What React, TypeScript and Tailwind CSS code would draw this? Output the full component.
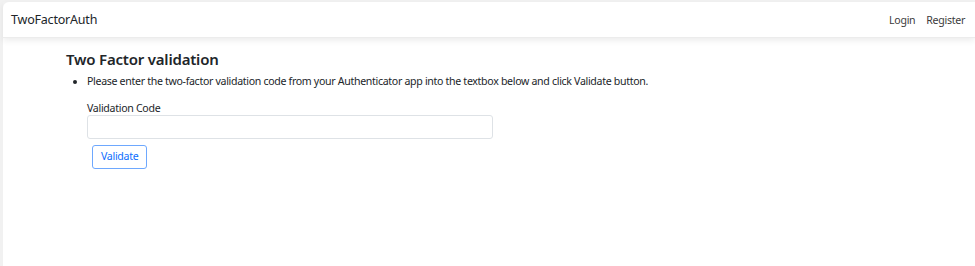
export default function App() {
  const font = { fontFamily: '"Noto Sans", "Open Sans", sans-serif' };
  return (
    <div className="w-[975px] h-[266px] bg-[#f1f1f1] pl-[3px] pt-[2px] overflow-hidden" style={font}>
      <div className="bg-white h-full rounded-tl-[6px] flex flex-col">
        <nav className="h-[36px] flex items-center justify-between pl-[8px] pr-[10px] pt-[2px] shadow-[0_3px_6px_rgba(0,0,0,0.07)] border-b border-[#ececec]">
          <span className="text-[12.5px] tracking-[-0.2px] text-[#212529]">TwoFactorAuth</span>
          <div className="flex gap-[11px] text-[10.6px] tracking-[-0.3px] text-[#3b3b3b]">
            <span>Login</span>
            <span>Register</span>
          </div>
        </nav>
        <main className="pl-[63px] pt-[10px]">
          <h1 className="text-[15px] font-semibold tracking-[-0.2px] text-[#212529] leading-[22px]">Two Factor validation</h1>
          <ul className="list-disc pl-[21px] mt-[2px] text-[10.6px] tracking-[-0.32px] text-[#212529]">
            <li className="leading-[18px]">
              Please enter the two-factor validation code from your Authenticator app into the textbox below and click Validate button.
            </li>
          </ul>
          <div className="pl-[21px] mt-[11px] text-[10.6px] tracking-[-0.3px]">
            <label className="block text-[#212529] leading-[14px]">Validation Code</label>
            <input className="block mt-[0px] w-[406px] h-[24px] border border-[#dee2e6] rounded-[3px] outline-none" />
            <button className="mt-[6px] ml-[5px] h-[24px] px-[8px] border border-[#6ea8fe] rounded-[3px] text-[#0d6efd]">
              Validate
            </button>
          </div>
        </main>
      </div>
    </div>
  );
}
